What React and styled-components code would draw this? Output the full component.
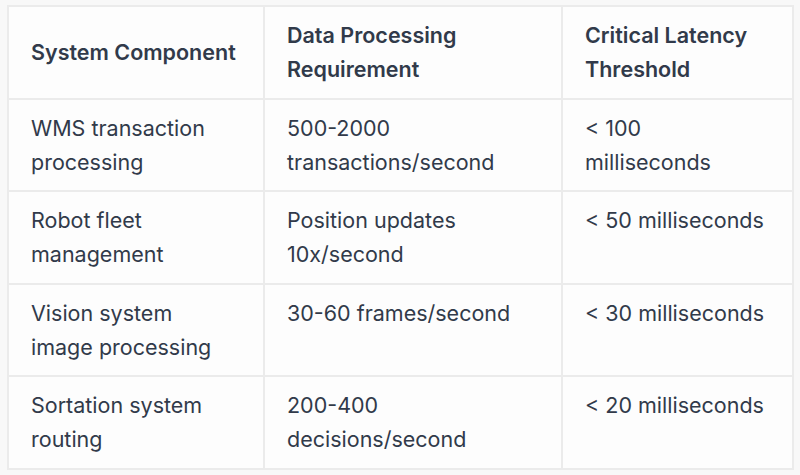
import styled, { createGlobalStyle } from "styled-components";

const Global = createGlobalStyle`
  html, body {
    margin: 0;
    background: #f8f8f8;
  }
  body {
    font-family: Inter, "Noto Sans", sans-serif;
    color: #313a4a;
  }
`;

const Page = styled.div`
  padding: 5px 8px 7px 7px;
`;

const Table = styled.table`
  width: 785px;
  border-collapse: collapse;
  background: #fdfdfd;
  border: 2px solid #ebebeb;
  table-layout: fixed;
`;

const Th = styled.th`
  text-align: left;
  font-weight: 600;
  font-size: 21.5px;
  line-height: 34px;
  padding: 11px 24px 11.5px 22px;
  vertical-align: middle;
  border: 2px solid #ebebeb;
`;

const Td = styled.td`
  font-size: 21.5px;
  line-height: 34px;
  padding: 11px 24px 11.5px 22px;
  vertical-align: top;
  border: 2px solid #ebebeb;
`;

const rows = [
  ["WMS transaction processing", "500-2000 transactions/second", "< 100 milliseconds"],
  ["Robot fleet management", "Position updates 10x/second", "< 50 milliseconds"],
  ["Vision system image processing", "30-60 frames/second", "< 30 milliseconds"],
  ["Sortation system routing", "200-400 decisions/second", "< 20 milliseconds"],
];

export default function App() {
  return (
    <Page>
      <Global />
      <Table>
        <colgroup>
          <col style={{ width: 256 }} />
          <col style={{ width: 298 }} />
          <col style={{ width: 231 }} />
        </colgroup>
        <thead>
          <tr>
            <Th>System Component</Th>
            <Th>Data Processing Requirement</Th>
            <Th>Critical Latency Threshold</Th>
          </tr>
        </thead>
        <tbody>
          {rows.map((r) => (
            <tr key={r[0]}>
              {r.map((c) => (
                <Td key={c}>{c}</Td>
              ))}
            </tr>
          ))}
        </tbody>
      </Table>
    </Page>
  );
}
